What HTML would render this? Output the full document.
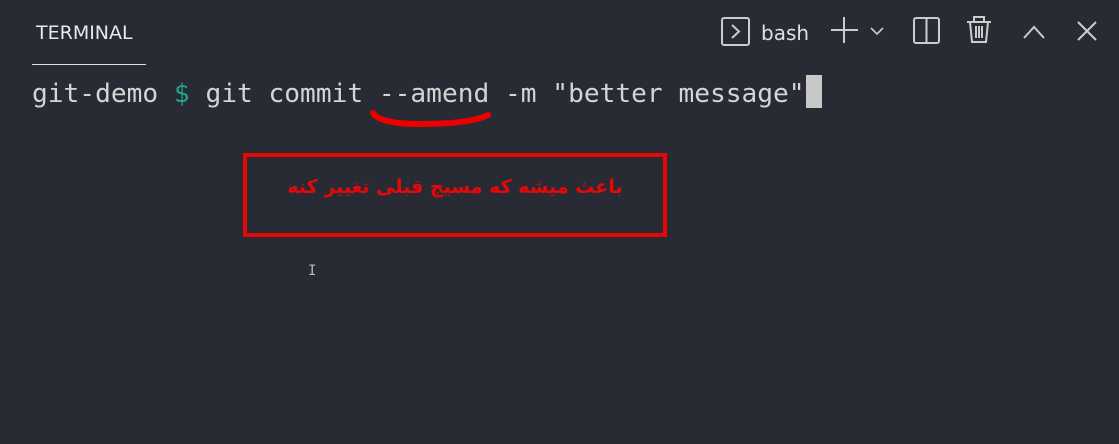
<!DOCTYPE html>
<html><head><meta charset="utf-8"><style>
body{margin:0;width:1119px;height:444px;background:#282b33;overflow:hidden;position:relative;font-family:"DejaVu Sans","Liberation Sans",sans-serif}
.t{position:absolute;left:36px;top:22px;color:#e8e8e8;font-size:19px;letter-spacing:0}
.ul{position:absolute;left:32px;top:64px;width:114px;height:1px;background:#e0e0e0}
.cmd{position:absolute;left:32px;top:77px;font-family:"DejaVu Sans Mono",monospace;font-size:26.2px;color:#d4d4d4;white-space:pre;line-height:34px}
.cur{position:absolute;left:806px;top:75px;width:16px;height:33px;background:#c8c8c8}
.box{position:absolute;left:243px;top:153px;width:416px;height:76px;border:4px solid #e60808}
.fa{position:absolute;left:247px;top:176px;width:416px;text-align:center;direction:rtl;color:#e60808;font-weight:bold;font-size:19px;font-family:"DejaVu Sans",sans-serif}
svg{position:absolute}
</style></head><body>
<div class="t">TERMINAL</div><div class="ul"></div>
<div class="cmd">git-demo <span style="color:#23a58a">$</span> git commit --amend -m "better message"</div>
<div class="cur"></div>
<svg width="1119" height="444" style="left:0;top:0" fill="none" stroke="#cccccc" stroke-width="2">
<path d="M373 113 Q380 124 420 124 Q470 124 488 115" stroke="#ee0000" stroke-width="6" stroke-linecap="round"/>
<rect x="722" y="18" width="27" height="27" rx="2"/>
<path d="M732 25 L739 31.5 L732 38"/>
<path d="M844 17 V43 M831 30 H858"/>
<path d="M871 28 L877 34 L883 28" stroke-width="1.6"/>
<rect x="914" y="18" width="25" height="25" rx="2"/><path d="M926.5 18 V43"/>
<path d="M967 22 H991 M974 22 V17 H984 V22 M970 22 L972 42 H986 L988 22 M976 26 V38 M979 26 V38 M982 26 V38"/>
<path d="M1024 38 L1034 27 L1044 38"/>
<path d="M1078 22 L1096 40 M1096 22 L1078 40"/>
</svg>
<div style="position:absolute;left:761px;top:21px;color:#e0e0e0;font-size:20px">bash</div>
<div class="box"></div>
<div class="fa">باعث میشه که مسیج قبلی تغییر کنه</div>
<div style="position:absolute;left:308px;top:263px;color:#bbb;font-size:14px;font-family:'DejaVu Sans Mono',monospace">I</div>
</body></html>
